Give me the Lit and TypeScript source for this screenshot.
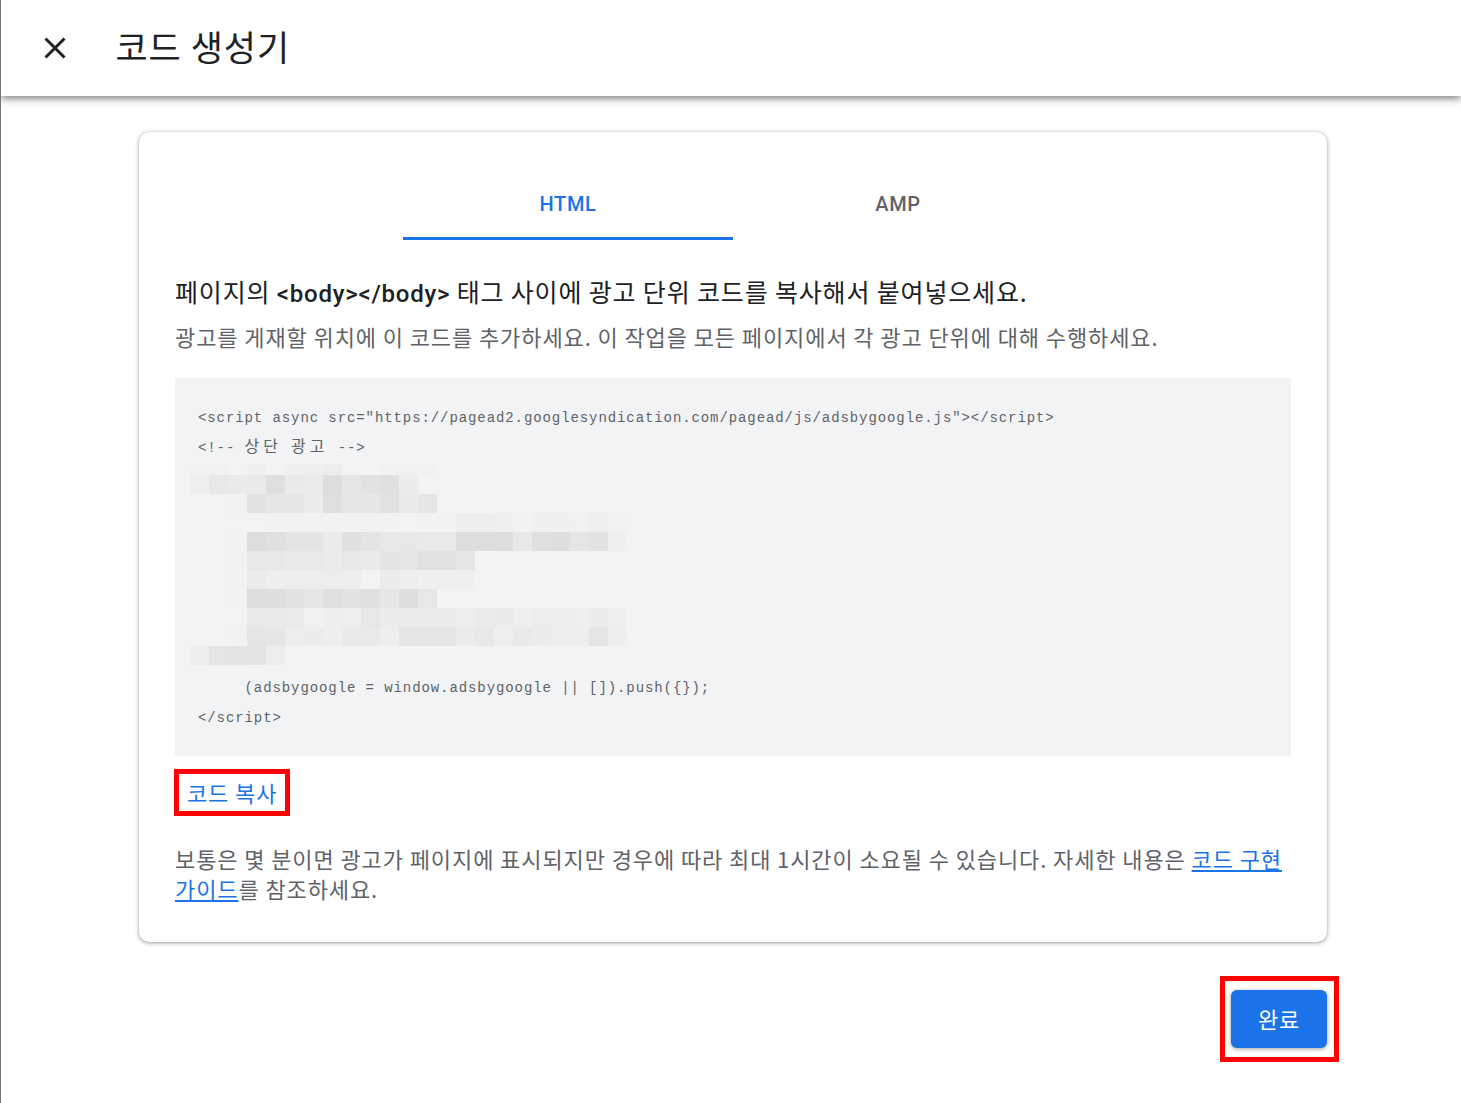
import { LitElement, html, css } from "lit";
import { customElement } from "lit/decorators.js";
import { styleMap } from "lit/directives/style-map.js";

const A = 0xf1f3f5;
// Blurred code rows: [start column, shade list]; shade is darkness 0..30 over the code background.
const ROWS: Array<[number, number[]]> = [
  [0, [2, 2, 0, 3, 0, 3, 3, 6, 0, 0, 2, 2, 2]],
  [0, [4, 11, 9, 9, 20, 9, 8, 22, 13, 17, 19, 7]],
  [2, [1, 17, 13, 13, 8, 20, 13, 13, 18, 9, 13]],
  [2, [0, 0, 1, 1, 1, 1, 1, 1, 1, 0, 1, 1, 6, 6, 4, 1, 3, 3, 2, 4, 1]],
  [2, [1, 22, 19, 15, 15, 8, 19, 15, 11, 12, 10, 10, 22, 22, 21, 11, 19, 21, 14, 17, 4]],
  [2, [1, 12, 12, 10, 10, 8, 11, 9, 15, 14, 17, 17, 13]],
  [2, [1, 8, 5, 6, 6, 6, 5, 0, 7, 6, 3, 4, 4]],
  [2, [1, 22, 21, 17, 14, 20, 17, 19, 13, 21, 12]],
  [3, [9, 9, 8, 2, 5, 4, 12, 7, 7, 7, 7, 5, 7, 9, 4, 6, 6, 4, 7, 4]],
  [2, [1, 14, 13, 6, 7, 5, 9, 10, 5, 13, 13, 13, 7, 11, 4, 9, 7, 5, 5, 14, 5]],
  [0, [6, 14, 15, 16, 6]],
];

function shade(d: number): string {
  const r = (A >> 16) & 255, g = (A >> 8) & 255, b = A & 255;
  return `rgb(${r - d},${g - d},${b - d})`;
}

@customElement("app-root")
export class AppRoot extends LitElement {
  static styles = css`
    :host {
      display: block;
      min-height: 1103px;
      box-sizing: border-box;
      background: #fff;
      border-left: 1px solid #757575;
      color: #202124;
      font-family: "Noto Sans CJK KR", "Roboto", sans-serif;
      overflow: hidden;
    }
    .bar {
      height: 96px;
      display: flex;
      align-items: center;
      background: #fff;
      box-shadow: 0 2px 8px rgba(60, 64, 67, 0.75);
    }
    .close { width: 22px; height: 22px; margin-left: 43px; display: block; }
    .title {
      margin: -4px 0 0 49.4px;
      font-size: 35px;
      font-weight: 400;
      line-height: 96px;
      letter-spacing: 1px;
    }
    .main { padding: 36px 134px 0 138px; }
    .card {
      border-radius: 10px;
      background: #fff;
      box-shadow: 0 1px 4px rgba(60, 64, 67, 0.5), 0 0 1px rgba(60, 64, 67, 0.25);
      padding: 0 36px 36px;
      height: 810px;
      box-sizing: border-box;
    }
    .tabs { display: flex; justify-content: center; height: 108px; }
    .tab {
      width: 330px;
      box-sizing: border-box;
      padding-top: 58px;
      text-align: center;
      font: 500 20px/28px Roboto, sans-serif;
      letter-spacing: 0.6px;
      color: #5f6368;
    }
    .tab.on { color: #1a73e8; border-bottom: 3px solid #1a73e8; }
    h2 {
      margin: 31px 0 0;
      font-size: 25px;
      line-height: 40px;
      font-weight: 400;
      letter-spacing: 0.84px;
      white-space: nowrap;
    }
    h2 .tag { font-family: Roboto, sans-serif; font-size: 24px; font-weight: 500; letter-spacing: 0.76px; }
    .sub {
      margin: 6px 0 0;
      font-size: 22px;
      line-height: 32px;
      letter-spacing: 0.9px;
      color: #5f6368;
      white-space: nowrap;
    }
    .code {
      margin-top: 26px;
      background: #f1f3f5;
      padding: 25px 23px 0;
      height: 378px;
      box-sizing: border-box;
      font: 400 14px/30px "Liberation Mono", "Noto Sans CJK KR", monospace;
      letter-spacing: 0.91px;
      color: #5f6368;
      white-space: pre;
    }
    .ko { font-size: 16px; letter-spacing: 3.9px; word-spacing: -4.2px; }
    .blur { height: 210px; margin: -1px 0 1px -8px; padding-top: 2px; box-sizing: border-box; }
    .row { display: flex; height: 19px; }
    .row.first { height: 11px; }
    .cell { width: 19px; flex: none; }
    .copy-box {
      display: inline-block;
      margin: 13px 0 0 -1px;
      border: 5px solid #f00;
      padding: 0 8px;
      height: 47px;
      box-sizing: border-box;
      font-size: 22px;
      line-height: 37px;
      letter-spacing: 0.88px;
      color: #1a73e8;
    }
    .note {
      margin: 27px 0 0;
      font-size: 22px;
      line-height: 30px;
      letter-spacing: 0.9px;
      color: #5f6368;
    }
    .note a { color: #1a73e8; text-decoration: underline; }
    .foot { display: flex; justify-content: flex-end; padding: 34px 122px 0 0; }
    .done-box {
      border: 5px solid #f00;
      padding: 9px 7px 9px 6px;
      height: 86px;
      box-sizing: border-box;
    }
    .done {
      width: 96px;
      height: 58px;
      border: 0;
      border-radius: 6px;
      background: #1a73e8;
      color: #fff;
      font: 400 22px "Noto Sans CJK KR", sans-serif;
      letter-spacing: 0.88px;
      box-shadow: 0 1px 4px rgba(60, 64, 67, 0.5);
      padding: 0 0 2px;
    }
  `;

  render() {
    return html`
      <header class="bar">
        <svg class="close" viewBox="0 0 22 22" aria-hidden="true">
          <path d="M1.5 1.5 L20.5 20.5 M20.5 1.5 L1.5 20.5" stroke="#202124" stroke-width="3" fill="none" />
        </svg>
        <h1 class="title">코드 생성기</h1>
      </header>
      <div class="main">
        <section class="card">
          <div class="tabs">
            <div class="tab on">HTML</div>
            <div class="tab">AMP</div>
          </div>
          <h2>페이지의 <span class="tag">&lt;body&gt;&lt;/body&gt;</span> 태그 사이에 광고 단위 코드를 복사해서 붙여넣으세요.</h2>
          <p class="sub">광고를 게재할 위치에 이 코드를 추가하세요. 이 작업을 모든 페이지에서 각 광고 단위에 대해 수행하세요.</p>
          <div class="code"><div>&lt;script async src="https://pagead2.googlesyndication.com/pagead/js/adsbygoogle.js"&gt;&lt;/script&gt;</div><div>&lt;!-- <span class="ko">상단 광고</span> --&gt;</div><div class="blur">${ROWS.map(
            ([start, cells], i) => html`<div class="row ${i === 0 ? "first" : ""}">${[
              ...Array(start).fill(-1),
              ...cells,
            ].map(
              (d) => html`<div class="cell" style=${styleMap(d < 0 ? {} : { background: shade(d) })}></div>`
            )}</div>`
          )}</div><div>     (adsbygoogle = window.adsbygoogle || []).push({});</div><div>&lt;/script&gt;</div></div>
          <div class="copy-box">코드 복사</div>
          <p class="note">보통은 몇 분이면 광고가 페이지에 표시되지만 경우에 따라 최대 1시간이 소요될 수 있습니다. 자세한 내용은 <a>코드 구현 가이드</a>를 참조하세요.</p>
        </section>
      </div>
      <div class="foot">
        <div class="done-box"><button class="done">완료</button></div>
      </div>
    `;
  }
}
